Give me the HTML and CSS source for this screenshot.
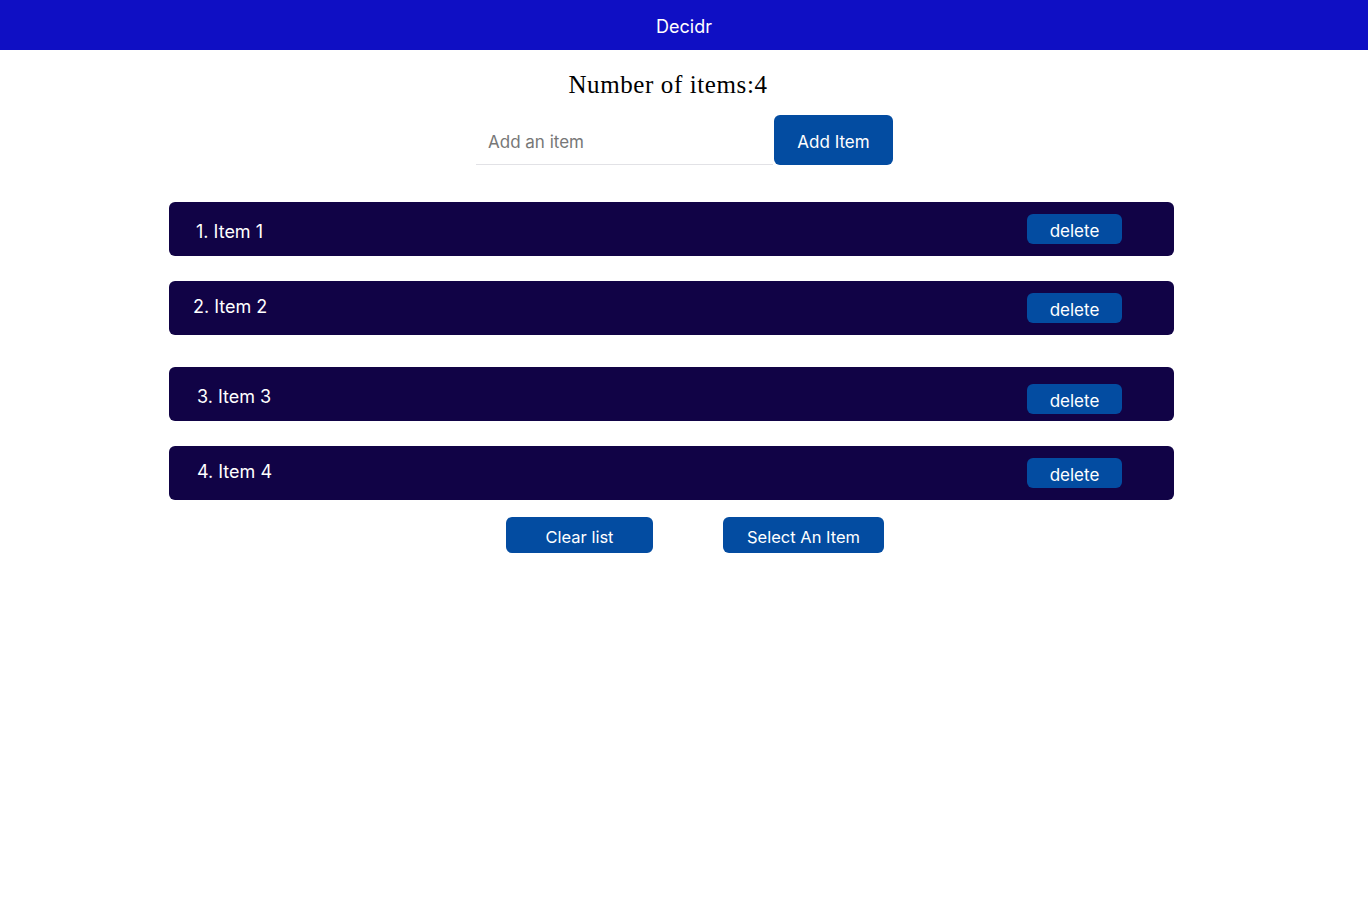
FILE: index.html
```html
<!DOCTYPE html>
<html>
<head>
<meta charset="utf-8">
<title>Decidr</title>
<link rel="stylesheet" href="styles.css">
</head>
<body>
<header class="topbar">Decidr</header>
<main class="main">
  <h1 class="count">Number of items:4</h1>
  <form class="add-form">
    <input class="add-input" type="text" placeholder="Add an item">
    <button class="btn add-btn" type="button">Add Item</button>
  </form>
  <ul class="list">
    <li class="item item-1"><span class="item-text">1. Item 1</span><button class="btn del-btn" type="button">delete</button></li>
    <li class="item item-2"><span class="item-text">2. Item 2</span><button class="btn del-btn" type="button">delete</button></li>
    <li class="item item-3"><span class="item-text">3. Item 3</span><button class="btn del-btn" type="button">delete</button></li>
    <li class="item item-4"><span class="item-text">4. Item 4</span><button class="btn del-btn" type="button">delete</button></li>
  </ul>
  <div class="actions">
    <button class="btn action-btn clear-btn" type="button">Clear list</button>
    <button class="btn action-btn select-btn" type="button">Select An Item</button>
  </div>
</main>
</body>
</html>
```
FILE: styles.css
```css
* { box-sizing: border-box; }
body {
  margin: 0;
  font-family: Inter, "Noto Sans", sans-serif;
  background: #fff;
  color: #000;
}
.topbar {
  height: 50px;
  background: #0f0fc4;
  color: #fff;
  font-size: 18px;
  display: flex;
  align-items: center;
  justify-content: center;
  padding-top: 3px;
}
.main {
  display: flex;
  flex-direction: column;
}
.count {
  margin: 18px 0 0 0;
  padding-right: 32px;
  text-align: center;
  font-family: "Liberation Serif", "Times New Roman", serif;
  font-weight: normal;
  font-size: 25px;
  letter-spacing: 0.6px;
  line-height: 33px;
}
.add-form {
  display: flex;
  justify-content: center;
  margin: 14px 0 0 0;
  padding-left: 1px;
}
.add-input {
  width: 297px;
  height: 50px;
  border: none;
  border-bottom: 1px solid #e2e2e6;
  padding: 4px 12px 0;
  font-family: Inter, sans-serif;
  font-size: 17px;
  outline: none;
  color: #333;
}
.add-input::placeholder { color: #777; }
.btn {
  font-family: Inter, sans-serif;
  color: #fff;
  background: #034ca1;
  border: none;
  border-radius: 6px;
  cursor: pointer;
}
.add-btn {
  width: 119px;
  height: 50px;
  font-size: 17px;
  margin-left: 1px;
  padding-top: 4px;
}
.list {
  list-style: none;
  margin: 37px 0 0 169px;
  padding: 0;
  width: 1005px;
}
.item {
  height: 54px;
  background: #110346;
  border-radius: 6px;
  display: flex;
  align-items: center;
  color: #fff;
  font-size: 18px;
  padding-left: 27px;
}
.item-text { position: relative; }
.del-btn {
  margin-left: auto;
  margin-right: 52px;
  width: 95px;
  height: 30px;
  font-size: 17px;
  padding-top: 4px;
}
.item-1 .item-text { top: 2px; }
.item-2 { margin-top: 25px; padding-left: 24px; }
.item-2 .item-text { top: -2px; }
.item-3 { margin-top: 32px; padding-left: 28px; }
.item-3 .item-text { top: 2px; }
.item-3 .del-btn { position: relative; top: 5px; }
.item-4 { margin-top: 25px; padding-left: 28px; }
.item-4 .item-text { top: -2px; }
.actions {
  display: flex;
  justify-content: center;
  gap: 70px;
  margin-top: 17px;
  padding-left: 22px;
}
.action-btn {
  height: 36px;
  font-size: 16.5px;
  padding-top: 4px;
}
.clear-btn { width: 147px; }
.select-btn { width: 161px; }
```
